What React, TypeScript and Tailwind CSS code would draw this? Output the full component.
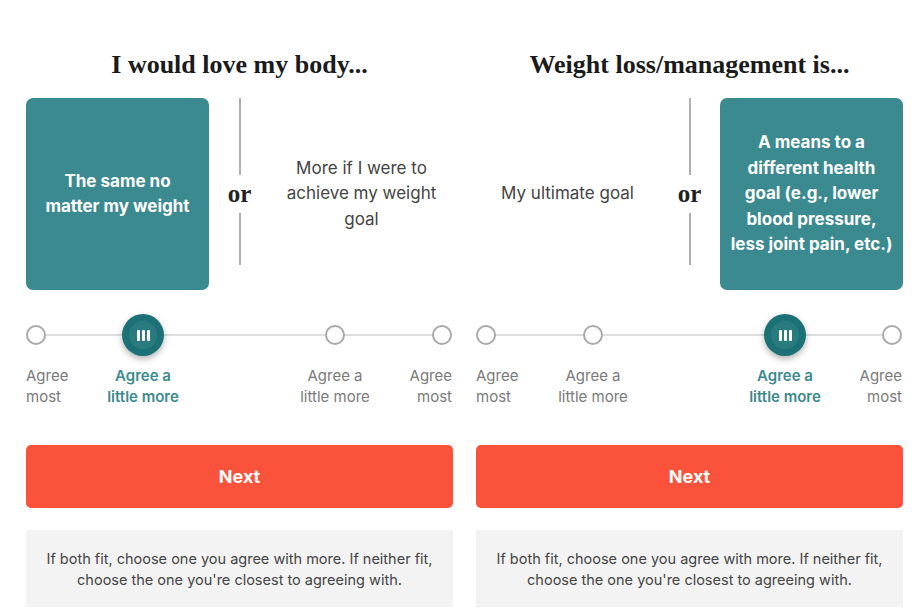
import React from "react";

const sans = "font-['Inter','Noto_Sans',sans-serif]";
const serif = "font-['Liberation_Serif','DejaVu_Serif',serif]";

type Stop = { label: string[]; align: "left" | "center" | "right" };

function Knob() {
  return (
    <div className="w-[42px] h-[42px] rounded-full bg-[#1c7176] shadow-[0_3px_6px_rgba(0,0,0,0.3)] flex items-center justify-center">
      <div className="w-[28px] h-[28px] rounded-full bg-[#2a7b7f] flex items-center justify-center gap-[2px]">
        <span className="w-[3px] h-[11px] bg-white rounded-[1px]" />
        <span className="w-[3px] h-[11px] bg-white rounded-[1px]" />
        <span className="w-[3px] h-[11px] bg-white rounded-[1px]" />
      </div>
    </div>
  );
}

function Dot() {
  return <div className="w-[20px] h-[20px] rounded-full border-2 border-[#a9a9a9] bg-white" />;
}

function Scale({ selected }: { selected: number }) {
  const stops: Stop[] = [
    { label: ["Agree", "most"], align: "left" },
    { label: ["Agree a", "little more"], align: "center" },
    { label: ["Agree a", "little more"], align: "center" },
    { label: ["Agree", "most"], align: "right" },
  ];
  const widths = ["w-[20px]", "w-[94px] ml-[50px]", "w-[94px] ml-[98px]", "w-[20px] ml-[50px]"];
  return (
    <div className="relative mt-[24px]">
      <div className="absolute left-[10px] right-[10px] top-[20px] h-[2px] bg-[#dedede]" />
      <div className="relative flex">
        {stops.map((s, i) => (
          <div key={i} className={`${widths[i]} flex flex-col`}>
            <div className="h-[42px] flex items-center justify-center">
              {i === selected ? <Knob /> : <Dot />}
            </div>
            <div
              className={`mt-[9px] text-[15px] leading-[21px] whitespace-nowrap ${
                i === selected ? "text-[#3d8a8e] font-semibold" : "text-[#7a7a7a]"
              } ${s.align === "left" ? "self-start text-left" : s.align === "right" ? "self-end text-right" : "self-center text-center"}`}
            >
              {s.label[0]}
              <br />
              {s.label[1]}
            </div>
          </div>
        ))}
      </div>
    </div>
  );
}

function Divider() {
  return (
    <div className="w-[61px] flex flex-col items-center">
      <div className="w-[2px] h-[77px] bg-[#b0b0b0]" />
      <div className={`${serif} font-bold text-[25px] leading-[38px] text-[#222]`}>or</div>
      <div className="w-[2px] h-[52px] bg-[#b0b0b0]" />
    </div>
  );
}

function Card({ children }: { children: React.ReactNode }) {
  return (
    <div className="w-[183px] h-[192px] rounded-[7px] bg-[#3b8a8f] flex items-center justify-center px-[4px] text-center text-white font-bold text-[17px] leading-[25.5px]">
      <p>{children}</p>
    </div>
  );
}

function Plain({ children }: { children: React.ReactNode }) {
  return (
    <div className="w-[183px] h-[192px] flex items-center justify-center px-[6px] text-center text-[#444] text-[17px] leading-[25.5px]">
      <p>{children}</p>
    </div>
  );
}

function Panel({ title, left, right, selected }: { title: string; left: React.ReactNode; right: React.ReactNode; selected: number }) {
  return (
    <div className="w-[427px] flex flex-col">
      <h2 className={`${serif} font-bold text-[26px] leading-[32px] text-[#1b1b1b] text-center mt-[49px] mb-[17px]`}>{title}</h2>
      <div className="flex">
        {left}
        <Divider />
        {right}
      </div>
      <Scale selected={selected} />
      <button className="mt-[38px] h-[63px] w-full rounded-[5px] bg-[#fb523b] text-white font-bold text-[18px]">Next</button>
      <div className="mt-[22px] h-[77px] bg-[#f3f3f3] flex items-center justify-center px-[10px] text-center text-[14.5px] leading-[21px] text-[#444]">
        <p>
          If both fit, choose one you agree with more. If neither fit,
          <br />
          choose the one you're closest to agreeing with.
        </p>
      </div>
    </div>
  );
}

export default function App() {
  return (
    <div className={`${sans} w-[920px] h-[613px] overflow-hidden bg-white flex gap-[23px] pl-[26px]`}>
      <Panel
        title="I would love my body..."
        left={<Card>The same no<br />matter my weight</Card>}
        right={<Plain>More if I were to<br />achieve my weight<br />goal</Plain>}
        selected={1}
      />
      <Panel
        title="Weight loss/management is..."
        left={<Plain>My ultimate goal</Plain>}
        right={
          <Card>
            A means to a<br />different health<br />goal (e.g., lower<br />blood pressure,<br />less joint pain, etc.)
          </Card>
        }
        selected={2}
      />
    </div>
  );
}
